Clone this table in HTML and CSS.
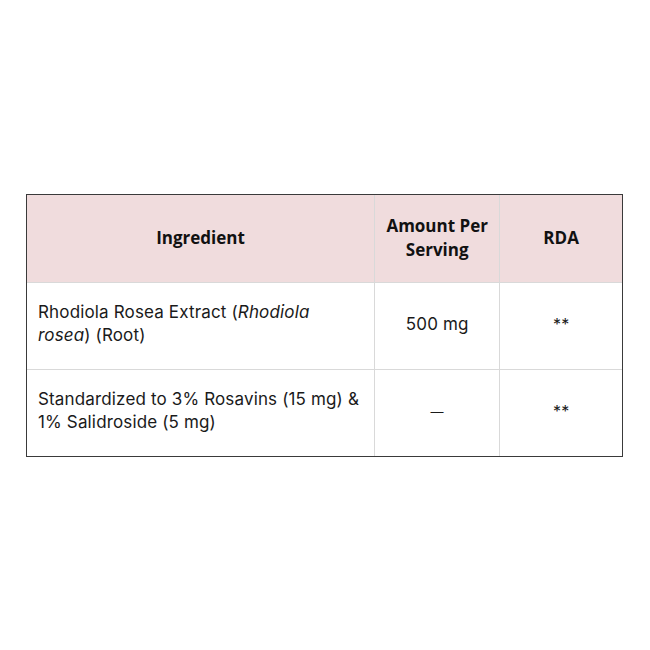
FILE: index.html
```html
<!DOCTYPE html>
<html>
<head>
<meta charset="utf-8">
<link rel="stylesheet" href="styles.css">
</head>
<body>
<div class="page">
  <div class="frame">
    <table class="facts">
      <colgroup>
        <col class="c1"><col class="c2"><col class="c3">
      </colgroup>
      <thead>
        <tr>
          <th>Ingredient</th>
          <th>Amount Per<br>Serving</th>
          <th>RDA</th>
        </tr>
      </thead>
      <tbody>
        <tr>
          <td class="name">Rhodiola Rosea Extract (<em>Rhodiola rosea</em>) (Root)</td>
          <td>500 mg</td>
          <td class="star">**</td>
        </tr>
        <tr>
          <td class="name">Standardized to 3% Rosavins (15 mg) &amp; 1% Salidroside (5 mg)</td>
          <td><span class="dash">—</span></td>
          <td class="star">**</td>
        </tr>
      </tbody>
    </table>
  </div>
</div>
</body>
</html>
```
FILE: styles.css
```css
html, body {
  margin: 0;
  padding: 0;
  background: #ffffff;
}
.page {
  width: 650px;
  height: 650px;
  padding: 194px 0 0 26px;
  box-sizing: border-box;
}
.frame {
  width: 597px;
  border: 1.5px solid #3a3a3a;
  box-sizing: border-box;
}
.facts {
  width: 100%;
  border-collapse: collapse;
  table-layout: fixed;
  border-style: hidden;
  font-family: "Inter", sans-serif;
  color: #1a1a1a;
}
.c1 { width: 347px; }
.c2 { width: 125px; }
.c3 { width: 122px; }
.facts th, .facts td {
  border: 1.5px solid #d9d9d9;
  height: 87px;
  box-sizing: border-box;
  text-align: center;
  vertical-align: middle;
  padding: 0 11px;
}
.facts th {
  background: #f0dcdd;
  font-family: "Open Sans", sans-serif;
  font-weight: 700;
  font-size: 17px;
  line-height: 24px;
  color: #111;
}
.facts td {
  font-size: 17px;
  line-height: 23px;
  letter-spacing: 0.15px;
  padding-bottom: 3px;
}
.facts td.name {
  text-align: left;
  padding-right: 12px;
}
.facts em {
  font-style: italic;
}
.facts td.star {
  font-size: 16px;
}
.dash {
  font-size: 13px;
  font-family: "Liberation Sans", sans-serif;
  vertical-align: 1px;
}
```
